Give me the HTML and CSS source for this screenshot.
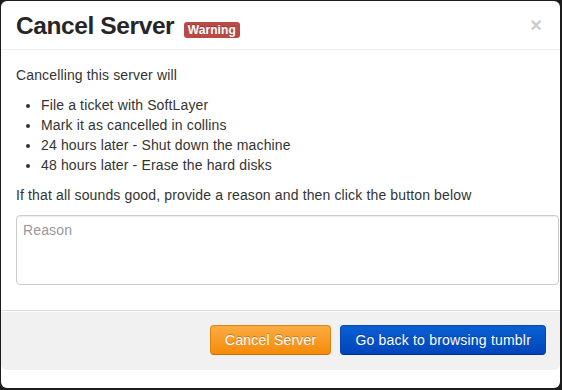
FILE: index.html
```html
<!DOCTYPE html>
<html>
<head>
<meta charset="utf-8">
<link rel="stylesheet" href="styles.css">
</head>
<body>
<div class="modal">
  <div class="modal-header">
    <h3 class="title">Cancel Server <span class="label">Warning</span></h3>
    <span class="close">×</span>
  </div>
  <div class="modal-body">
    <p>Cancelling this server will</p>
    <ul>
      <li>File a ticket with SoftLayer</li>
      <li>Mark it as cancelled in collins</li>
      <li>24 hours later - Shut down the machine</li>
      <li>48 hours later - Erase the hard disks</li>
    </ul>
    <p>If that all sounds good, provide a reason and then click the button below</p>
    <textarea class="reason" placeholder="Reason"></textarea>
  </div>
  <div class="modal-footer">
    <button class="btn btn-warning">Cancel Server</button>
    <button class="btn btn-primary">Go back to browsing tumblr</button>
  </div>
</div>
</body>
</html>
```
FILE: styles.css
```css
html, body {
  margin: 0;
  padding: 0;
  background: #1c1c1c;
  font-family: "Liberation Sans", Arial, sans-serif;
  font-size: 14px;
  line-height: 20px;
  color: #333;
}
.modal {
  margin: 1px 2px 2px 1px;
  width: 559px;
  height: 387px;
  background: #fff;
  border-radius: 6px;
  overflow: hidden;
  display: flex;
  flex-direction: column;
}
.modal-header {
  padding: 10px 15px 8px;
  border-bottom: 1px solid #eee;
  display: flex;
  justify-content: space-between;
  align-items: center;
}
.title {
  margin: 0;
  font-size: 24.5px;
  font-weight: bold;
  line-height: 30px;
  letter-spacing: -0.4px;
  color: #262626;
}
.label {
  display: inline-block;
  padding: 2px 4px;
  font-size: 12px;
  font-weight: bold;
  line-height: 12px;
  letter-spacing: 0.1px;
  color: #fff;
  background: #b94a48;
  border-radius: 3px;
  text-shadow: 0 -1px 0 rgba(0,0,0,0.25);
  vertical-align: baseline;
  margin-left: 3px;
}
.close {
  font-size: 20px;
  font-weight: bold;
  line-height: 20px;
  color: #000;
  opacity: 0.2;
  margin-right: 3px;
  margin-top: -2px;
}
.modal-body {
  padding: 15px;
  letter-spacing: 0.14px;
}
.modal-body p {
  margin: 0 0 10px;
}
.modal-body ul {
  margin: 0 0 10px 25px;
  padding: 0;
}
.reason {
  display: block;
  box-sizing: content-box;
  width: 100%;
  height: 60px;
  margin: 0 0 10px;
  padding: 4px 6px;
  border: 1px solid #ccc;
  border-radius: 4px;
  box-shadow: inset 0 1px 1px rgba(0,0,0,0.075);
  font-family: "Liberation Sans", Arial, sans-serif;
  font-size: 14px;
  line-height: 20px;
  letter-spacing: 0.14px;
  color: #555;
  resize: none;
  outline: none;
}
.reason::placeholder {
  color: #999;
}
.modal-footer {
  padding: 14px 14px 15px 15px;
  background: #f1f1f1;
  border-top: 1px solid #ddd;
  border-radius: 0 0 6px 6px;
  box-shadow: inset 0 1px 0 #fff;
  display: flex;
  justify-content: flex-end;
  gap: 9px;
}
.btn {
  font-family: "Liberation Sans", Arial, sans-serif;
  font-size: 14px;
  line-height: 20px;
  letter-spacing: 0.2px;
  padding: 4px 14px;
  height: 30px;
  border-radius: 4px;
  color: #fff;
  text-shadow: 0 -1px 0 rgba(0,0,0,0.25);
  cursor: pointer;
}
.btn-warning {
  background: linear-gradient(to bottom, #fbac43, #f58b0a);
  border: 1px solid #e2830f;
  border-bottom-color: #c86e05;
}
.btn-primary {
  background: linear-gradient(to bottom, #0960d2, #0044bb);
  border: 1px solid #0a46b0;
  border-bottom-color: #003494;
}
```
